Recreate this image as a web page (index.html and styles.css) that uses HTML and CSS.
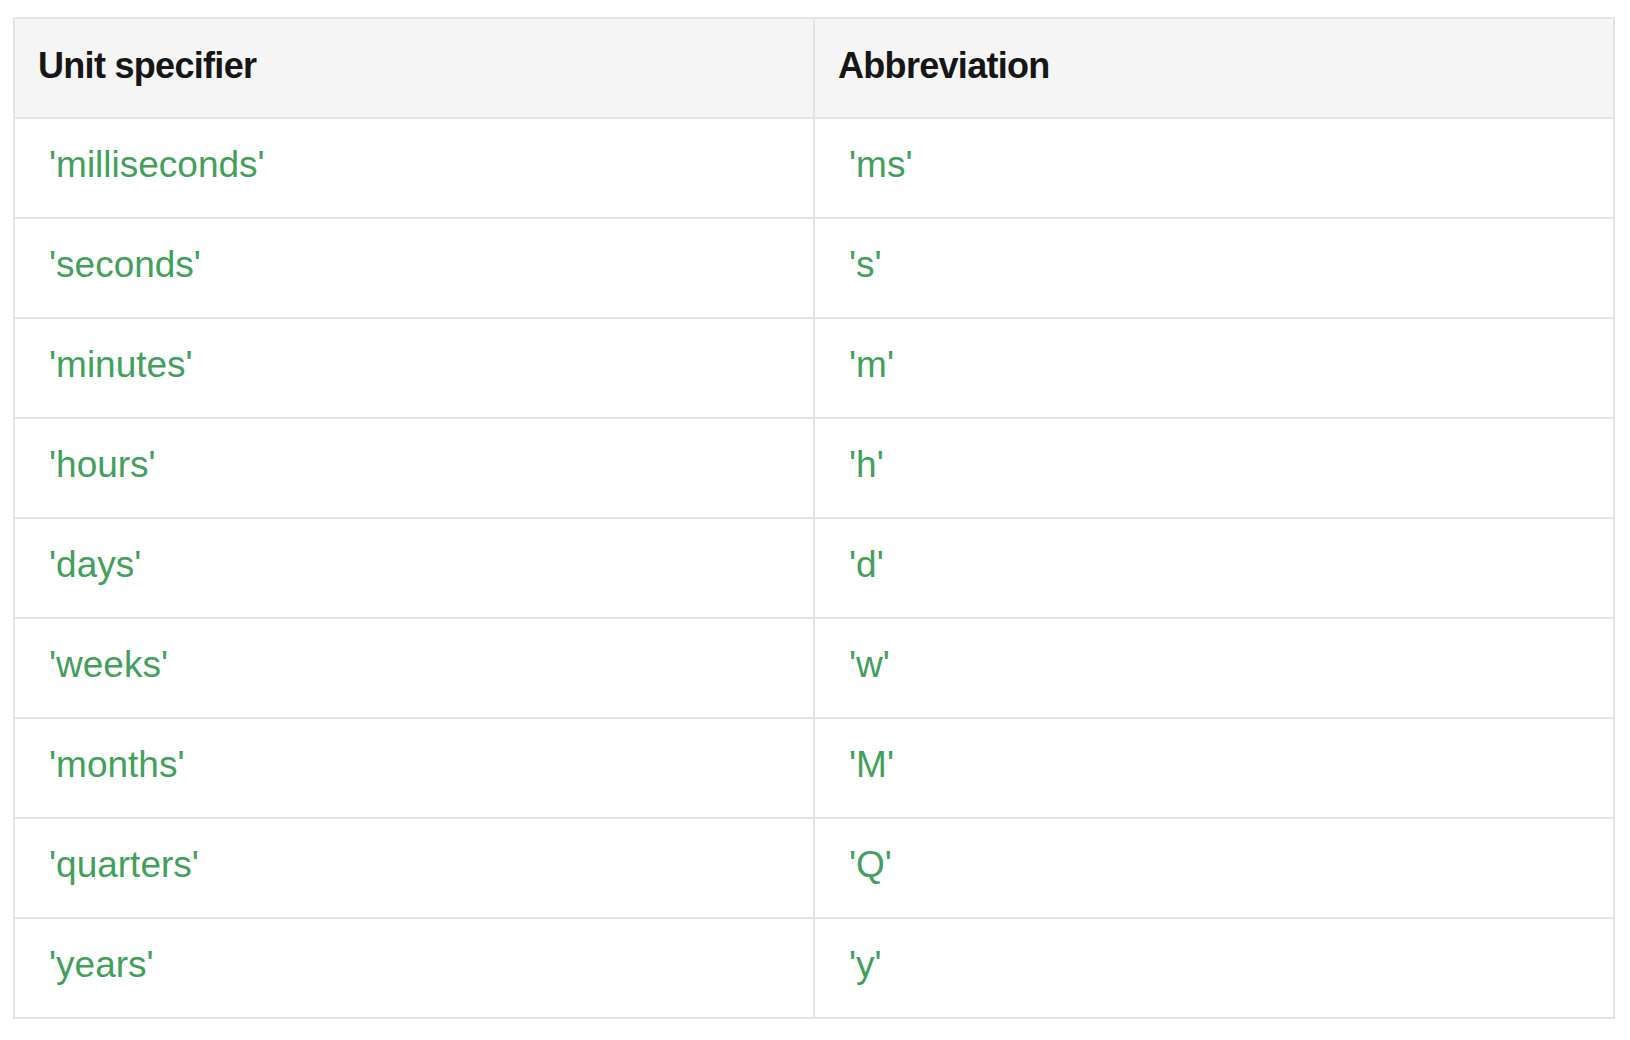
FILE: index.html
```html
<!DOCTYPE html>
<html>
<head>
<meta charset="utf-8">
<link rel="stylesheet" href="styles.css">
</head>
<body>
<div class="page">
<table class="units">
<thead>
<tr><th>Unit specifier</th><th>Abbreviation</th></tr>
</thead>
<tbody>
<tr><td><code>'milliseconds'</code></td><td><code>'ms'</code></td></tr>
<tr><td><code>'seconds'</code></td><td><code>'s'</code></td></tr>
<tr><td><code>'minutes'</code></td><td><code>'m'</code></td></tr>
<tr><td><code>'hours'</code></td><td><code>'h'</code></td></tr>
<tr><td><code>'days'</code></td><td><code>'d'</code></td></tr>
<tr><td><code>'weeks'</code></td><td><code>'w'</code></td></tr>
<tr><td><code>'months'</code></td><td><code>'M'</code></td></tr>
<tr><td><code>'quarters'</code></td><td><code>'Q'</code></td></tr>
<tr><td><code>'years'</code></td><td><code>'y'</code></td></tr>
</tbody>
</table>
</div>
</body>
</html>
```
FILE: styles.css
```css
html, body {
  margin: 0;
  padding: 0;
  background: #ffffff;
}
.page {
  padding: 17px 0 0 13px;
}
.units {
  border-collapse: collapse;
  width: 1602px;
  table-layout: fixed;
  font-family: "Liberation Sans", Arial, sans-serif;
}
.units th,
.units td {
  border: 2px solid #e4e4e4;
  padding: 0;
  vertical-align: middle;
  text-align: left;
}
.units th {
  background: #f5f5f5;
  color: #161616;
  font-size: 36px;
  font-weight: bold;
  letter-spacing: -0.7px;
  height: 93px;
  padding-left: 23px;
  padding-bottom: 5px;
}
.units td {
  height: 92px;
  padding-left: 34px;
  padding-bottom: 6px;
}
.units code {
  font-family: "Liberation Sans", Arial, sans-serif;
  font-size: 37px;
  color: #42a05b;
}
```
